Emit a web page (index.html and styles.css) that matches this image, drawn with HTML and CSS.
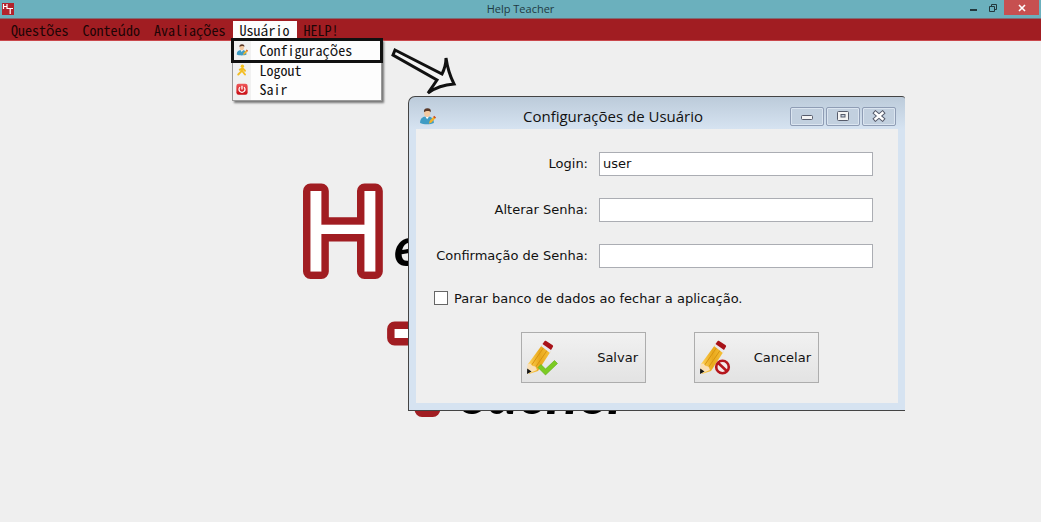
FILE: index.html
```html
<!DOCTYPE html>
<html lang="pt-BR">
<head>
<meta charset="utf-8">
<title>Help Teacher</title>
<link rel="stylesheet" href="styles.css">
</head>
<body>
<svg class="defs" width="0" height="0" aria-hidden="true">
  <defs>
    <linearGradient id="wood" x1="0" y1="0" x2="1" y2="0"><stop offset="0" stop-color="#ffd45c"/><stop offset=".5" stop-color="#e9a91c"/><stop offset="1" stop-color="#f6c23a"/></linearGradient>
    <linearGradient id="power" x1="0" y1="0" x2="0" y2="1"><stop offset="0" stop-color="#f0585a"/><stop offset="1" stop-color="#c80c12"/></linearGradient>
    <symbol id="user" viewBox="0 0 16 16">
      <path d="M1 14c0-4 2-5.500 5-6h3c3 .5 5 2 5 6-3 1.600-10 1.600-13 0z" fill="#3f9cc4"/>
      <path d="M6 8l1.600 2.500L9.500 8z" fill="#fff"/>
      <ellipse cx="7.700" cy="4.800" rx="2.900" ry="3.700" fill="#f3c9a0"/>
      <path d="M4.700 4C4.300 1.500 5.500.3 8 .3s3.600 1.200 3 3.700C10 2.300 6.500 2.500 4.700 4z" fill="#5a3826"/>
      <path d="M9.300 14.800l.8-2.800 4-4.300 1.700 1.500-4 4.500z" fill="#f2b32a"/>
      <path d="M13.400 8.400l.9-1 1.700 1.500-.9 1z" fill="#c8492e"/>
    </symbol>
    <symbol id="pencil" viewBox="0 0 34 36">
      <path d="M2 24L16 5l9 6-13 20-9 3z" fill="url(#wood)"/>
      <path d="M5 26L18 7M9 28L22 9" stroke="#d89412" stroke-width="1"/>
      <path d="M1.500 24l3-.5 2 2.500 3 .5 1.500 3.500L1 34z" fill="#f9dfb5"/>
      <path d="M1.200 28.500l4.300 3L1 34z" fill="#161616"/>
      <path d="M15 6l2-2.500 9 6L24 13z" fill="#e9e9ee"/>
      <path d="M16.500 4l1.800-2.600c.5-.7 1.200-.7 1.900-.3l6.200 4c.8.6.9 1.200.4 2L25 10z" fill="#a81319"/>
    </symbol>
  </defs>
</svg>

<header class="titlebar">
  <svg class="app-icon" viewBox="0 0 12 12" aria-hidden="true">
    <rect width="12" height="12" fill="#b3232b"/>
    <path d="M1.500 1v5M5 1v5M1.500 3.500H5M5.500 5.500H11M8.200 5.500V11" stroke="#fff" stroke-width="1.200" fill="none"/>
  </svg>
  <h1 class="app-title">Help Teacher</h1>
  <div class="window-controls">
    <button class="control" aria-label="Minimizar"><svg width="10" height="10" viewBox="0 0 10 10"><path d="M2 7h7" stroke="#22383d" stroke-width="2"/></svg></button>
    <button class="control" aria-label="Restaurar"><svg width="10" height="10" viewBox="0 0 10 10"><path d="M1.500 3.500h5v5h-5zM3.500 3V1.500h5v5H7" fill="none" stroke="#22383d"/></svg></button>
    <button class="control control-close" aria-label="Fechar"><svg width="8" height="8" viewBox="0 0 8 8"><path d="M1 1l6 6M7 1L1 7" stroke="#fff" stroke-width="1.600"/></svg></button>
  </div>
</header>

<nav class="menubar">
  <button class="menu-item">Questões</button>
  <button class="menu-item">Conteúdo</button>
  <button class="menu-item">Avaliações</button>
  <div class="menu-open">
    <button class="menu-item active" aria-expanded="true">Usuário</button>
    <div class="dropdown">
      <button class="option selected"><svg class="option-icon"><use href="#user"/></svg>Configurações</button>
      <button class="option"><svg class="option-icon" viewBox="0 0 16 16"><circle cx="8.500" cy="3" r="2.300" fill="#f6c21c"/><path d="M9 6L6.500 10.500 3 14M8 9l4 5M9 6l-4 1.500M9 6l3 3" fill="none" stroke="#f3bd22" stroke-width="2.600" stroke-linecap="round" stroke-linejoin="round"/></svg>Logout</button>
      <button class="option"><svg class="option-icon" viewBox="0 0 16 16"><rect x=".5" y="1" width="15" height="14.500" rx="3" fill="url(#power)"/><path d="M5.300 5.500a4 4 0 1 0 5.400 0M8 3.500v5" fill="none" stroke="#fff" stroke-width="1.700"/></svg>Sair</button>
    </div>
  </div>
  <button class="menu-item">HELP!</button>
</nav>

<main class="desktop">
  <svg class="logo" width="360" height="250" viewBox="0 0 360 250" role="img" aria-label="Help Teacher">
    <text class="cap" x="0" y="93">H</text>
    <text class="script" x="93" y="88">e</text>
    <text class="cap" x="91" y="232">T</text>
    <text class="script wide" x="157" y="236">eacher</text>
  </svg>
  <svg class="arrow" width="68" height="54" viewBox="0 0 68 54" aria-hidden="true">
    <path d="M4 4L51 28Q55 20 55 12 57 26 63 38 48 39 37 47 42 40 46 34L2 9z" fill="#f4f4f4" stroke="#111" stroke-width="3"/>
  </svg>

  <form class="dialog" aria-labelledby="dialog-title">
    <div class="dialog-bar">
      <svg class="dialog-icon" aria-hidden="true"><use href="#user"/></svg>
      <h2 class="dialog-title" id="dialog-title">Configurações de Usuário</h2>
      <div class="dialog-controls">
        <button type="button" class="dialog-control" aria-label="Minimizar"><svg width="14" height="12" viewBox="0 0 14 12"><rect x="1.500" y="5.500" width="11" height="4" rx="1" fill="#f4f4f4" stroke="#565b6b"/></svg></button>
        <button type="button" class="dialog-control" aria-label="Maximizar"><svg width="14" height="12" viewBox="0 0 14 12"><rect x="1.500" y="1.500" width="11" height="9" rx="1" fill="#f4f4f4" stroke="#565b6b"/><rect x="5" y="4.500" width="4" height="2.500" fill="#c5d1df" stroke="#565b6b"/></svg></button>
        <button type="button" class="dialog-control" aria-label="Fechar"><svg width="14" height="12" viewBox="0 0 14 12"><path d="M3.500 3l7 6M10.500 3l-7 6" stroke="#565b6b" stroke-width="4.400" stroke-linecap="square"/><path d="M3.500 3l7 6M10.500 3l-7 6" stroke="#fff" stroke-width="2.400" stroke-linecap="square"/></svg></button>
      </div>
    </div>
    <div class="dialog-body">
      <div class="fields">
        <label for="login">Login:</label><input class="field" id="login" type="text" value="user">
        <label for="senha">Alterar Senha:</label><input class="field" id="senha" type="password">
        <label for="confirma">Confirmação de Senha:</label><input class="field" id="confirma" type="password">
      </div>
      <div class="check"><input class="checkbox" id="parar" type="checkbox"><label for="parar">Parar banco de dados ao fechar a aplicação.</label></div>
      <div class="actions">
        <button type="button" class="action"><svg class="action-icon" viewBox="0 0 34 36"><use href="#pencil" width="34" height="36"/><path d="M12 27.500l3-3 4.500 4.500 9-8.500 3 3L19.500 35z" fill="#7ccb23" stroke="#5cab14" stroke-width=".6"/></svg>Salvar</button>
        <button type="button" class="action"><svg class="action-icon" viewBox="0 0 34 36"><use href="#pencil" width="34" height="36"/><circle cx="23.500" cy="27" r="6.300" fill="#f3eaea" stroke="#b5161c" stroke-width="2.600"/><path d="M19.200 23l8.600 8" stroke="#b5161c" stroke-width="2.600"/></svg>Cancelar</button>
      </div>
    </div>
  </form>
</main>
</body>
</html>
```
FILE: styles.css
```css
* { box-sizing: border-box; }

body {
  margin: 0;
  min-height: 100vh;
  display: flex;
  flex-direction: column;
  background: #efefef;
  color: #111;
  font-family: "DejaVu Sans", Verdana, sans-serif;
  font-size: 13px;
}

button {
  margin: 0;
  padding: 0;
  border: 0;
  background: none;
  color: inherit;
  font: inherit;
}

.defs { position: absolute; }

.titlebar {
  display: grid;
  grid-template-columns: 1fr auto 1fr;
  height: 19px;
  background: #6bb0bd;
  border-bottom: 1px solid #7e6c75;
}

.app-icon {
  width: 12px;
  height: 12px;
  margin: 3px 2px;
}

.app-title {
  margin: 0;
  color: #1f3a42;
  font: 11px/18px "Open Sans", "Segoe UI", sans-serif;
}

.window-controls {
  display: flex;
  justify-content: flex-end;
  gap: 10px;
  padding-right: 2px;
}

.control {
  display: flex;
  align-items: center;
  height: 15px;
}

.control-close {
  width: 35px;
  justify-content: center;
  margin-left: -4px;
  background: #c75050;
}

.menubar {
  display: flex;
  height: 22px;
  padding: 2px 4px 0;
  background: #a11d22;
  border-bottom: 1px solid #c9474b;
  font: 14px/18px "Noto Sans Mono CJK SC", "DejaVu Sans Mono", monospace;
}

.menu-item {
  height: 18px;
  padding: 0 7px;
  color: #1d0506;
  white-space: nowrap;
}

.menu-open { position: relative; }

.menu-item.active {
  background: #fdfdfd;
  color: #111;
}

.dropdown {
  position: absolute;
  z-index: 2;
  top: 18px;
  left: -1px;
  width: 150px;
  padding-bottom: 1px;
  background: linear-gradient(90deg, #f1f1f1 18px, #fdfdfd 18px);
  border: 1px solid #999;
  box-shadow: 2px 2px 2px #777;
}

.option {
  display: flex;
  align-items: center;
  gap: 12px;
  width: 100%;
  height: 19px;
  padding: 0 0 2px 3px;
}

.option.selected {
  height: 21px;
  outline: 3px solid #111;
  outline-offset: -1px;
}

.option-icon {
  width: 12px;
  height: 12px;
}

.desktop {
  position: relative;
  flex: 1;
}

.logo {
  position: absolute;
  left: 301px;
  top: 137px;
}

.cap {
  font: 116px "Liberation Sans", Arial, sans-serif;
  fill: #fff;
  stroke: #a11d22;
  stroke-width: 15px;
  stroke-linejoin: round;
  paint-order: stroke;
}

.script {
  font: italic bold 54px Lato, sans-serif;
  fill: #000;
}

.wide { font-size: 60px; }

.arrow {
  position: absolute;
  left: 391px;
  top: 5px;
}

.dialog {
  position: absolute;
  left: 408px;
  top: 55px;
  width: 497px;
  padding: 0 7px 7px;
  background: linear-gradient(#bccbda, #d6e3f1 32px);
  border: 1px solid #444;
  border-right: 0;
  border-radius: 7px 3px 0 0;
}

.dialog-bar {
  display: flex;
  align-items: center;
  height: 32px;
  padding: 6px 2px 0 3px;
}

.dialog-icon {
  width: 17px;
  height: 17px;
}

.dialog-title {
  flex: 1;
  margin: 0;
  text-align: center;
  font: 15px/24px "Open Sans", "Segoe UI", sans-serif;
}

.dialog-controls {
  display: flex;
  gap: 2px;
}

.dialog-control {
  display: flex;
  align-items: center;
  justify-content: center;
  width: 34px;
  height: 19px;
  border: 1px solid #8f9db5;
  border-radius: 2px;
  box-shadow: inset 0 0 0 1px #dbe5f0;
  background: #c2d0df;
}

.dialog-body {
  padding: 23px 25px 20px 18px;
  background: #efefef;
}

.fields {
  display: grid;
  grid-template-columns: 154px 1fr;
  align-items: center;
  gap: 22px 11px;
  text-align: right;
  white-space: nowrap;
}

.fields label { padding-bottom: 2px; }

.field {
  width: 100%;
  height: 24px;
  padding: 0 3px 2px;
  border: 1px solid #abadb3;
  background: #fff;
  color: #111;
  font: inherit;
}

.check {
  display: flex;
  align-items: center;
  gap: 6px;
  margin-top: 21px;
  height: 18px;
}

.checkbox {
  appearance: none;
  width: 14px;
  height: 14px;
  margin: 0;
  border: 1px solid #666;
  background: #fff;
}

.actions {
  display: flex;
  justify-content: center;
  gap: 48px;
  margin-top: 25px;
  padding-left: 33px;
}

.action {
  display: flex;
  align-items: center;
  justify-content: space-between;
  width: 125px;
  height: 51px;
  padding: 0 7px 0 4px;
  border: 1px solid #adadad;
  background: linear-gradient(#f1f1f1, #e3e3e3);
}

.action-icon {
  width: 34px;
  height: 36px;
}
```
